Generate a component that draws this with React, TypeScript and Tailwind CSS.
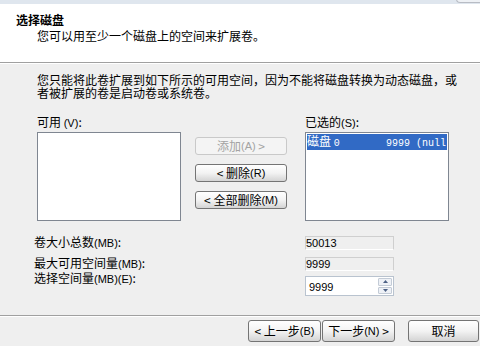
import type { ReactNode } from 'react';

function Btn({ children, disabled, className = '' }: { children: ReactNode; disabled?: boolean; className?: string }) {
  return (
    <button
      type="button"
      className={
        (disabled
          ? 'border-[#c9c9c9] text-[#a3a3a3] bg-[#f4f4f4] '
          : 'border-[#747474] text-black bg-linear-to-b from-white via-[#f3f3f3] to-[#d4d4d4] ') +
        'flex items-center justify-center border rounded-[3px] text-[12px] leading-none whitespace-nowrap ' +
        className
      }
    >
      {children}
    </button>
  );
}

function Num({ children }: { children: ReactNode }) {
  return <span className="font-['Liberation_Sans',sans-serif] text-[11px]">{children}</span>;
}

function Mono({ children }: { children: ReactNode }) {
  return <span className="font-['Liberation_Mono',monospace] text-[10px]">{children}</span>;
}

export default function App() {
  return (
    <div className="relative w-[480px] h-[346px] overflow-hidden bg-[#efefef] text-black text-[12px] leading-[12px] font-['Noto_Sans_CJK_SC',sans-serif]">
      {/* header */}
      <div className="h-[63px] bg-white border-t-[4px] border-t-[#dfe6ee] border-b border-b-[#a0a0a0]">
        <div className="pt-[10px] pl-[16px] font-bold">选择磁盘</div>
        <div className="mt-[4px] pl-[37px]">您可以用至少一个磁盘上的空间来扩展卷。</div>
      </div>
      <div className="absolute right-0 top-[-6px] w-[24px] h-[9px] border-l border-b border-[#b8bcc4] rounded-bl-[4px] bg-[#eef1f5]" />
      <div className="h-px bg-white" />

      {/* body */}
      <div className="pt-[9px] pl-[37px]">
        <p className="leading-[13px]">
          您只能将此卷扩展到如下所示的可用空间，因为不能将磁盘转换为动态磁盘，或
          <br />
          者被扩展的卷是启动卷或系统卷。
        </p>

        <div className="flex mt-[17px]">
          <div className="w-[144px]">
            <div>
              可用 <Num>(V)</Num>:
            </div>
            <div className="mt-[3px] h-[89px] bg-white border border-[#7f8691]" />
          </div>

          <div className="ml-[14px] w-[92px] pt-[21px] flex flex-col gap-[9px]">
            <Btn disabled className="h-[18px]">
              添加<Num>(A)</Num>&nbsp;&gt;
            </Btn>
            <Btn className="h-[18px]">
              &lt;&nbsp;删除<Num>(R)</Num>
            </Btn>
            <Btn className="h-[18px]">
              &lt;&nbsp;全部删除<Num>(M)</Num>
            </Btn>
          </div>

          <div className="ml-[18px] w-[144px]">
            <div>
              已选的<Num>(S)</Num>:
            </div>
            <div className="mt-[3px] h-[89px] bg-white border border-[#7f8691] pt-px px-px overflow-hidden">
              <div className="h-[16px] bg-[#316ac5] text-white flex items-center whitespace-nowrap">
                <span className="w-[79px] shrink-0">
                  磁盘 <Mono>0</Mono>
                </span>
                <span className="w-[30px] shrink-0">
                  <Mono>9999</Mono>
                </span>
                <span className="shrink-0">
                  <Mono>(null)</Mono>
                </span>
              </div>
            </div>
          </div>
        </div>
      </div>

      {/* sizes */}
      <div className="pl-[34px] mt-[15px] flex flex-col">
        <div className="flex items-start h-[14px]">
          <div className="w-[271px]">
            卷大小总数<Num>(MB)</Num>:
          </div>
          <div className="w-[89px] h-[14px] border border-[#cfcfcf] border-b-white flex items-center">
            <Num>50013</Num>
          </div>
        </div>
        <div className="flex items-start h-[14px] mt-[7px]">
          <div className="w-[271px]">
            最大可用空间量<Num>(MB)</Num>:
          </div>
          <div className="w-[89px] h-[14px] border border-[#cfcfcf] border-b-white flex items-center">
            <Num>9999</Num>
          </div>
        </div>
        <div className="flex items-start h-[20px] mt-[5px]">
          <div className="w-[271px] -mt-[4px]">
            选择空间量<Num>(MB)(E)</Num>:
          </div>
          <div className="w-[89px] h-[20px] bg-white border border-[#b9c3cf] flex items-center">
            <div className="flex-1 pl-[3px]">
              <Num>9999</Num>
            </div>
            <div className="w-[16px] h-full flex flex-col gap-px p-px">
              <div className="flex-1 flex items-center justify-center border border-[#c3cbd6] bg-[#eef1f6] rounded-[1px]">
                <svg width="5" height="3" viewBox="0 0 5 3">
                  <path d="M0 3 L2.5 0 L5 3 Z" fill="#4d6185" />
                </svg>
              </div>
              <div className="flex-1 flex items-center justify-center border border-[#c3cbd6] bg-[#eef1f6] rounded-[1px]">
                <svg width="5" height="3" viewBox="0 0 5 3">
                  <path d="M0 0 L2.5 3 L5 0 Z" fill="#4d6185" />
                </svg>
              </div>
            </div>
          </div>
        </div>
      </div>

      {/* footer */}
      <div className="mt-[19px] border-t border-[#a0a0a0]" />
      <div className="h-px bg-white" />
      <div className="mt-[3px] flex justify-end pr-[1px]">
        <Btn className="w-[73px] h-[22px]">
          &lt;&nbsp;上一步<Num>(B)</Num>
        </Btn>
        <Btn className="ml-px w-[73px] h-[22px]">
          下一步<Num>(N)</Num>&nbsp;&gt;
        </Btn>
        <Btn className="ml-[13px] w-[71px] h-[22px]">取消</Btn>
      </div>
    </div>
  );
}
